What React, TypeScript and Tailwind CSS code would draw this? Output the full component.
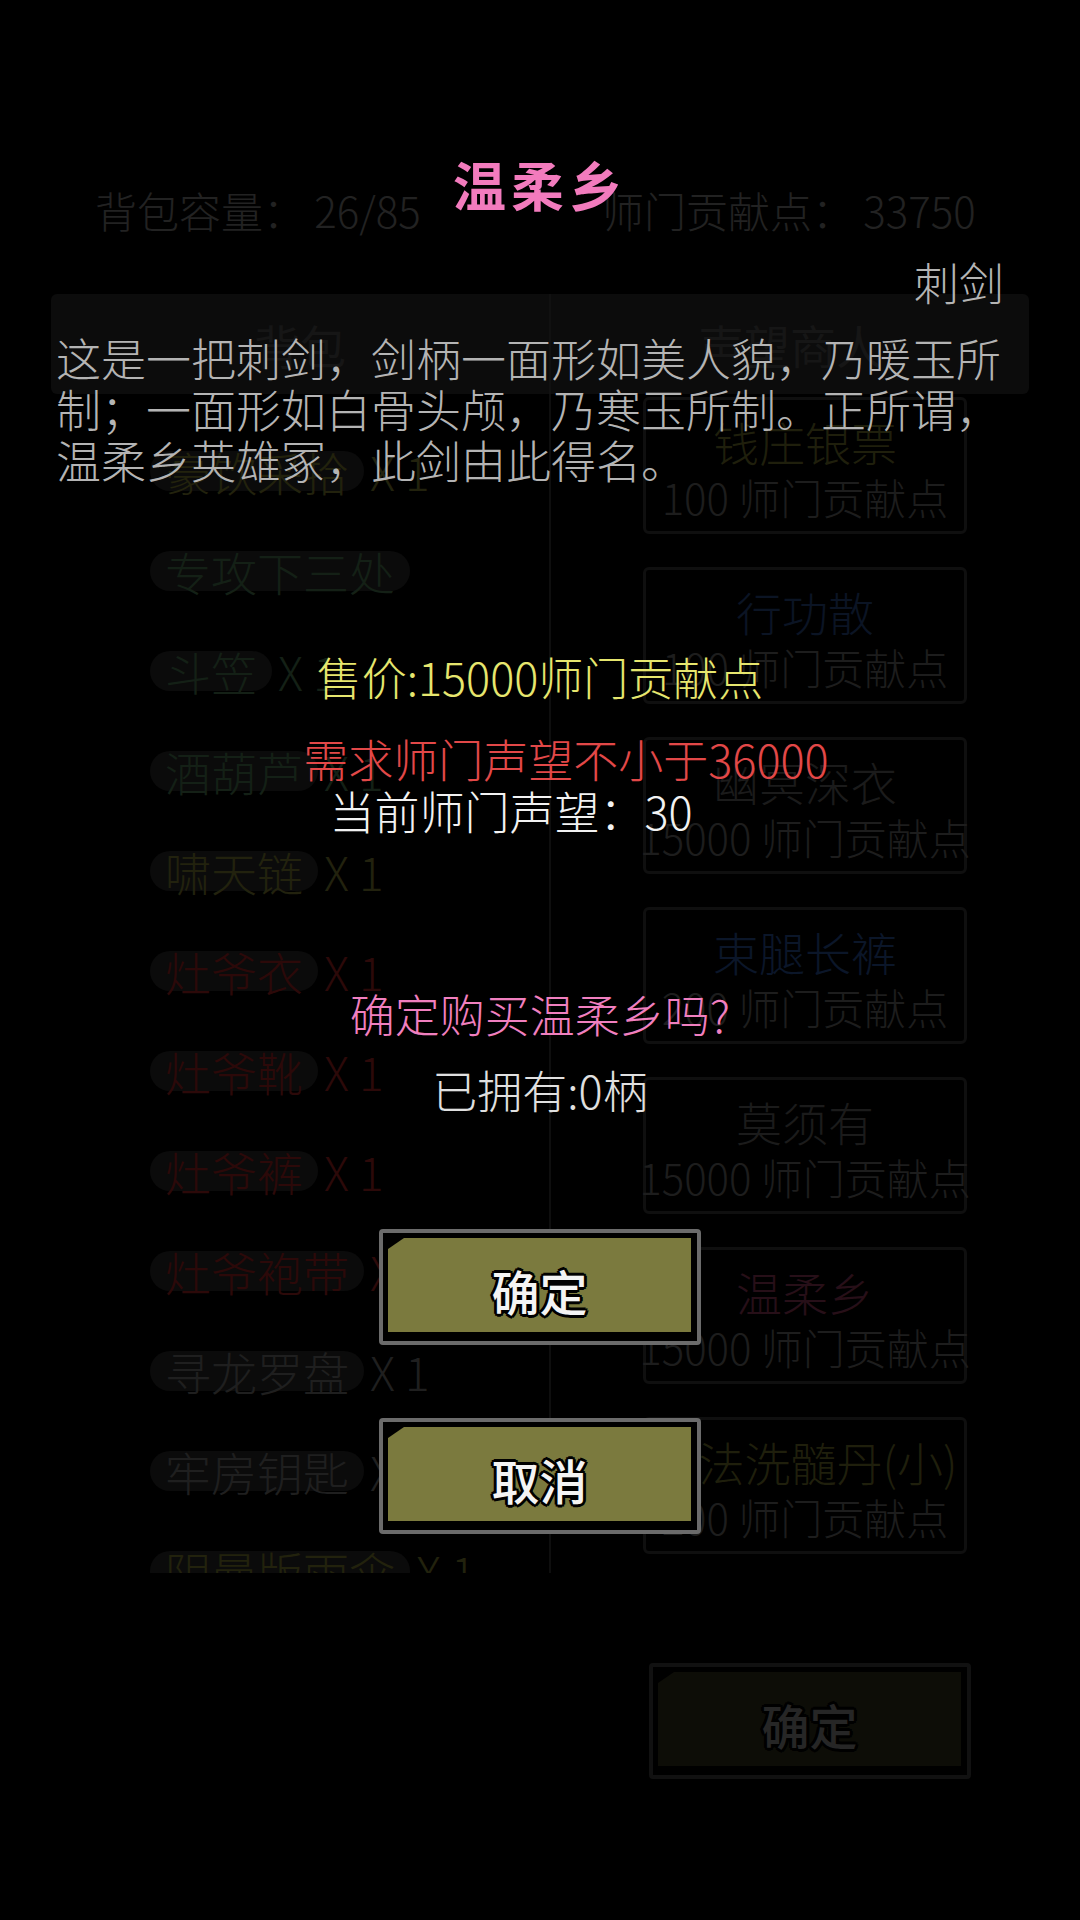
import React from "react";

interface BagItem {
  name: string;
  count?: string;
  color: string;
}

interface ShopItem {
  name: string;
  price: string;
  color: string;
}

// Background page, already dimmed by the open purchase dialog.
const bagItems: BagItem[] = [
  { name: "豪饮采拾", count: "X 1", color: "text-[#22220d]" },
  { name: "专攻下三处", color: "text-[#142016]" },
  { name: "斗笠", count: "X 1", color: "text-[#142016]" },
  { name: "酒葫芦", count: "X 1", color: "text-[#142016]" },
  { name: "啸天链", count: "X 1", color: "text-[#22220e]" },
  { name: "灶爷衣", count: "X 1", color: "text-[#2c0909]" },
  { name: "灶爷靴", count: "X 1", color: "text-[#2c0909]" },
  { name: "灶爷裤", count: "X 1", color: "text-[#2c0909]" },
  { name: "灶爷袍带", count: "X 1", color: "text-[#2c0909]" },
  { name: "寻龙罗盘", count: "X 1", color: "text-[#1f1f1f]" },
  { name: "牢房钥匙", count: "X 1", color: "text-[#1f1f1f]" },
  { name: "阴曼版雨伞", count: "X 1", color: "text-[#22220d]" },
];

const shopItems: ShopItem[] = [
  { name: "钱庄银票", price: "100 师门贡献点", color: "text-[#1f1f0c]" },
  { name: "行功散", price: "100 师门贡献点", color: "text-[#0b1424]" },
  { name: "幽冥深衣", price: "15000 师门贡献点", color: "text-[#1b1b1b]" },
  { name: "束腿长裤", price: "200 师门贡献点", color: "text-[#0b1629]" },
  { name: "莫须有", price: "15000 师门贡献点", color: "text-[#1b1b1b]" },
  { name: "温柔乡", price: "15000 师门贡献点", color: "text-[#270f18]" },
  { name: "身法洗髓丹(小)", price: "200 师门贡献点", color: "text-[#1f1f0c]" },
];

function GameButton({ label, dim = false }: { label: string; dim?: boolean }) {
  return (
    <div
      className={`w-[322px] h-[116px] rounded-[4px] border-[4px] bg-black pt-[5px] pl-[5px] pr-[6px] pb-[9px] ${
        dim ? "border-[#111111]" : "border-[#6b6b6b]"
      }`}
    >
      <div
        className={`h-full flex items-center justify-center pt-[10px] [clip-path:polygon(16px_0,100%_0,100%_100%,0_100%,0_11px)] ${
          dim ? "bg-[#0d0d07]" : "bg-[#7b7a3e]"
        }`}
      >
        <span
          className={`text-[48px] leading-[56px] font-medium [text-shadow:0_0_2px_#000,3px_0_0_#000,-3px_0_0_#000,0_3px_0_#000,0_-3px_0_#000,2px_2px_0_#000,-2px_-2px_0_#000,2px_-2px_0_#000,-2px_2px_0_#000] ${
            dim ? "text-[#262626]" : "text-[#f4f4f4]"
          }`}
        >
          {label}
        </span>
      </div>
    </div>
  );
}

function ShopBox({ item }: { item: ShopItem }) {
  return (
    <div className="w-[324px] h-[137px] shrink-0 rounded-[6px] border-[3px] border-[#0f0f0f] flex flex-col items-center">
      <p className={`mt-[13px] text-[46px] leading-[56px] font-light whitespace-nowrap ${item.color}`}>
        {item.name}
      </p>
      <p className="mt-[3px] text-[42px] leading-[50px] font-light whitespace-nowrap text-[#1d1d1d]">
        {item.price}
      </p>
    </div>
  );
}

export default function App() {
  return (
    <div className="relative w-[1080px] h-[1920px] overflow-hidden bg-black font-['Noto_Sans_CJK_SC',sans-serif]">
      {/* Page behind the dialog */}
      <div className="flex flex-col">
        <div className="flex pt-[185px] text-[42px] leading-[50px] font-light text-[#222222]">
          <span className="w-[602px] pl-[95px] whitespace-nowrap">背包容量： 26/85</span>
          <span className="whitespace-nowrap">师门贡献点： 33750</span>
        </div>

        <div className="mx-[51px] mt-[59px] h-[100px] rounded-[6px] bg-[#0c0c0c] grid grid-cols-[500px_1fr] text-[46px] text-[#161616]">
          <div className="flex items-center justify-center border-r-2 border-[#111111]">背包</div>
          <div className="flex items-center justify-center">声望商人</div>
        </div>

        <div className="flex h-[1179px]">
          <div className="ml-[51px] w-[500px] shrink-0 border-r-2 border-[#0e0e0e] overflow-hidden pt-[27px] pl-[99px]">
            {bagItems.map((it) => (
              <div key={it.name} className="h-[100px] flex items-center text-[46px] leading-[56px] font-light whitespace-nowrap">
                <span className={`inline-flex items-center h-[40px] rounded-full bg-[#0b0b0b] px-[15px] ${it.color}`}>
                  {it.name}
                </span>
                {it.count && <span className={`ml-[6px] ${it.color}`}>{it.count}</span>}
              </div>
            ))}
          </div>
          <div className="flex flex-col gap-[33px] pt-[3px] pl-[92px]">
            {shopItems.map((it) => (
              <ShopBox key={it.name} item={it} />
            ))}
          </div>
        </div>

        <div className="mt-[90px] ml-[649px]">
          <GameButton label="确定" dim />
        </div>
      </div>

      {/* Purchase dialog */}
      <div className="absolute inset-0 flex flex-col items-center">
        <h1 className="pt-[154px] text-[53px] leading-[60px] font-bold text-[#f27bbd] tracking-[5px]">
          温柔乡
        </h1>
        <p className="self-end mt-[43px] pr-[76px] text-[45px] leading-[50px] font-light text-[#b4b4b4]">刺剑</p>
        <p className="self-stretch mt-[25px] pl-[56px] pr-[70px] text-[45px] leading-[51px] font-light text-[#b4b4b4]">
          这是一把刺剑，剑柄一面形如美人貌，乃暖玉所制；一面形如白骨头颅，乃寒玉所制。正所谓，温柔乡英雄冢，此剑由此得名。
        </p>

        <p className="mt-[167px] text-[45px] leading-[50px] font-light text-[#e6e66e] whitespace-nowrap">
          售价:15000师门贡献点
        </p>
        <p className="mt-[32px] pl-[52px] text-[45px] leading-[50px] font-light text-[#e24848] whitespace-nowrap">
          需求师门声望不小于36000
        </p>
        <p className="mt-[2px] pr-[58px] text-[45px] leading-[50px] font-light text-[#f2f2f2] whitespace-nowrap">
          当前师门声望：30
        </p>

        <p className="mt-[153px] text-[45px] leading-[50px] font-light text-[#f07fbf] whitespace-nowrap">
          确定购买温柔乡吗?
        </p>
        <p className="mt-[26px] text-[45px] leading-[50px] font-light text-[#e0e0e0] whitespace-nowrap">
          已拥有:0柄
        </p>

        <div className="mt-[114px]">
          <GameButton label="确定" />
        </div>
        <div className="mt-[73px]">
          <GameButton label="取消" />
        </div>
      </div>
    </div>
  );
}
